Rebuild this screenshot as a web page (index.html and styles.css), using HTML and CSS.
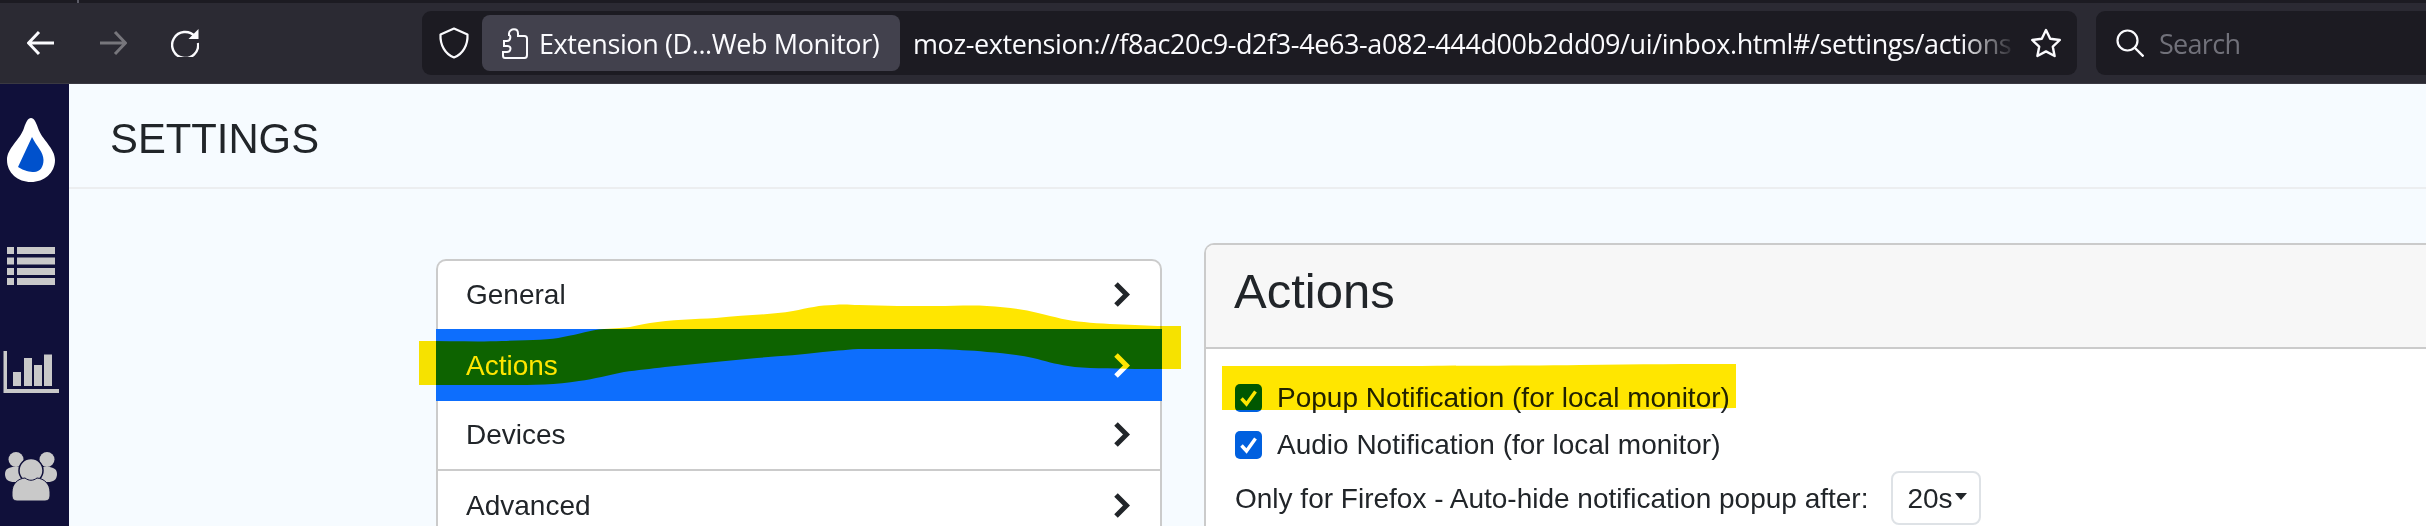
FILE: index.html
```html
<!DOCTYPE html>
<html lang="en">
<head>
<meta charset="utf-8">
<title>Settings</title>
<link rel="stylesheet" href="styles.css">
</head>
<body>
<div class="page">
  <div class="tabstrip"><span class="tick"></span></div>
  <div class="toolbar">
    <svg class="nav" width="28" height="28" viewBox="0 0 28 28"><path d="M27 14H2M12 3L1.500 14 12 25" fill="none" stroke="#fbfbfe" stroke-width="3"/></svg>
    <svg class="nav" width="28" height="28" viewBox="0 0 28 28"><path d="M1 14H26M16 3L26.500 14 16 25" fill="none" stroke="#77767c" stroke-width="3"/></svg>
    <svg class="nav" width="28" height="28" viewBox="0 0 28 28"><path d="M24 7.500A13 13 0 1 0 27 14" fill="none" stroke="#fbfbfe" stroke-width="2.400"/><path d="M27.500 0V10H17.500Z" fill="#fbfbfe"/></svg>
    <div class="urlbar">
      <svg class="shield" width="30" height="32" viewBox="0 0 30 32"><path d="M15 1.500L28.500 7.500C29 18 24 27 15 30.500 6 27 1 18 1.500 7.500Z" fill="none" stroke="#fbfbfe" stroke-width="2.200" stroke-linejoin="round"/></svg>
      <div class="identity">
        <svg width="26" height="31" viewBox="0 0 26 31"><path d="M2 13H5C9 13 9 7 7 7V5.500C7 3 9.500 1.200 12 1.200S16 3 16 5.500V8H22.500C24 8 25 9 25 10.500V27C25 28.800 24 30 22.500 30H3C1.500 30 1 29 1 27.500V24H5C9 24 10 18 5.500 18H2Z" fill="none" stroke="#fbfbfe" stroke-width="2"/></svg>
        <span class="identity-label">Extension (D...Web Monitor)</span>
      </div>
      <span class="url">moz-extension://f8ac20c9-d2f3-4e63-a082-444d00b2dd09/ui/inbox.html#/settings/actions</span>
      <svg class="star" width="32" height="30" viewBox="0 0 32 30"><path d="M16 2L20.200 10.800 29.800 12 22.800 18.700 24.600 28 16 23.400 7.400 28 9.200 18.700 2.200 12 11.800 10.800Z" fill="none" stroke="#fbfbfe" stroke-width="2.400" stroke-linejoin="round"/></svg>
    </div>
    <div class="searchbar">
      <svg width="28" height="28" viewBox="0 0 28 28"><circle cx="11.500" cy="11.500" r="10" fill="none" stroke="#fbfbfe" stroke-width="2.200"/><path d="M18.500 18.500L27.500 27.500" stroke="#fbfbfe" stroke-width="2.400"/></svg>
      <span class="search-label">Search</span>
    </div>
  </div>

  <div class="app">
    <nav class="sidebar">
      <svg class="side-logo" width="69" height="66" viewBox="0 0 69 66"><path d="M31 0C34 0 36 4 38 10 42 22 55 30 55 42 55 55 44 64 31 64 18 64 7 55 7 42 7 30 20 22 24 10 26 4 28 0 31 0Z" fill="#fff"/><path d="M32 19L18 49C24 53 30 54 34 54 40 54 43.500 49 43.500 42 43.500 34 37 29 32 19Z" fill="#0051cc"/></svg>
      <svg class="side-list" width="69" height="38" viewBox="0 0 69 38" fill="#c9c9c9"><rect x="7" y="0" width="7" height="7"/><rect x="17" y="0" width="38" height="7"/><rect x="7" y="10.500" width="7" height="7"/><rect x="17" y="10.500" width="38" height="7"/><rect x="7" y="21" width="7" height="7"/><rect x="17" y="21" width="38" height="7"/><rect x="7" y="31" width="7" height="7"/><rect x="17" y="31" width="38" height="7"/></svg>
      <svg class="side-chart" width="69" height="42" viewBox="0 0 69 42" fill="#c9c9c9"><path d="M3.500 0H7V38H59V42H3.500Z"/><rect x="13" y="21" width="8" height="14"/><rect x="24" y="7" width="8" height="28"/><rect x="34" y="14" width="8" height="21"/><rect x="44" y="3.500" width="8" height="31.500"/></svg>
      <svg class="side-users" width="69" height="50" viewBox="0 0 69 50" fill="#c9c9c9"><circle cx="16" cy="7.500" r="7.500"/><circle cx="47" cy="7.500" r="7.500"/><path d="M5 22C5 17 9 15 14 15H48C53 15 57 17 57 22 57 28 53 30 48 30H14C9 30 5 28 5 22Z"/><circle cx="31" cy="18.500" r="12" stroke="#10103a" stroke-width="1.500"/><path d="M12 40C12 32 18 26.500 25 26 29 29 33 29 37 26 44 26.500 50 32 50 40V44C50 47 48 49 45 49H17C14 49 12 47 12 44Z" stroke="#10103a" stroke-width="1"/></svg>
    </nav>
    <main class="content">
      <header class="page-header"><h1 class="page-title">SETTINGS</h1></header>
      <div class="columns">
        <div class="menu">
          <div class="menu-row"><span>General</span><svg class="chev" width="17" height="25" viewBox="0 0 17 25"><path d="M3 2L13.500 12.500 3 23" fill="none" stroke="#212529" stroke-width="5"/></svg></div>
          <div class="menu-row menu-row-active"><span>Actions</span><svg class="chev" width="17" height="25" viewBox="0 0 17 25"><path d="M3 2L13.500 12.500 3 23" fill="none" stroke="#fff" stroke-width="5"/></svg></div>
          <div class="menu-row"><span>Devices</span><svg class="chev" width="17" height="25" viewBox="0 0 17 25"><path d="M3 2L13.500 12.500 3 23" fill="none" stroke="#212529" stroke-width="5"/></svg></div>
          <div class="menu-row"><span>Advanced</span><svg class="chev" width="17" height="25" viewBox="0 0 17 25"><path d="M3 2L13.500 12.500 3 23" fill="none" stroke="#212529" stroke-width="5"/></svg></div>
        </div>
        <section class="panel">
          <div class="panel-head"><h2 class="panel-title">Actions</h2></div>
          <div class="panel-body">
            <label class="check-row"><span class="check"><svg width="27" height="28" viewBox="0 0 27 28"><path d="M6.500 14.500L11.500 20 20.500 7.500" fill="none" stroke="#fff" stroke-width="3.400"/></svg></span>Popup Notification (for local monitor)</label>
            <label class="check-row"><span class="check"><svg width="27" height="28" viewBox="0 0 27 28"><path d="M6.500 14.500L11.500 20 20.500 7.500" fill="none" stroke="#fff" stroke-width="3.400"/></svg></span>Audio Notification (for local monitor)</label>
            <div class="select-row">
              <span>Only for Firefox - Auto-hide notification popup after:</span>
              <div class="select"><span>20s</span><span class="caret"></span></div>
            </div>
          </div>
        </section>
      </div>
    </main>
  </div>

  <svg class="marker" width="2426" height="526" viewBox="0 0 2426 526">
    <path fill="#ffe600" d="M419 341C450 341 480 342 502 341 530 340 550 340 563 337 580 334 590 330 604 329 615 328 625 328 630 327 636 326 642 324 650 323 670 320 695 319 716 318 745 315 770 315 793 311 808 308 820 305 834 305 845 304 850 305 859 305 885 306 910 306 936 306 955 306 972 305 987 306 1005 307 1022 309 1038 313 1055 317 1068 321 1084 322 1100 324 1120 324 1135 325 1150 326 1165 326 1181 326V369C1165 369 1150 369 1135 369 1110 368 1085 369 1068 366 1055 364 1045 361 1033 358 1018 355 1002 353 987 352 970 350 955 350 936 349 910 349 885 349 864 349 848 349 838 351 823 352 800 355 780 356 757 358 725 361 695 364 665 367 650 369 638 370 624 372 608 375 595 379 579 381 555 385 530 385 502 385 475 385 450 385 419 385Z"/>
    <path fill="#ffe600" d="M1222 366C1350 366 1500 366 1580 365 1640 364 1690 364 1736 364V408C1690 409 1640 410 1580 410 1500 410 1350 410 1222 410Z"/>
  </svg>
</div>
</body>
</html>
```
FILE: styles.css
```css
* { box-sizing: border-box; }
html, body { margin: 0; padding: 0; }
body { width: 2426px; height: 526px; overflow: hidden; background: #f6fbff; color: #212529; font-family: "Liberation Sans", Arial, sans-serif; font-size: 28px; line-height: 41px; }
.page { position: relative; width: 2426px; height: 526px; overflow: hidden; display: flex; flex-direction: column; }

.tabstrip { height: 3px; background: #1c1b22; position: relative; flex: none; }
.tick { display: block; width: 2px; height: 3px; margin-left: 77px; background: #5b5b66; }

.toolbar { flex: none; height: 81px; background: #2b2a33; border-bottom: 1px solid #3a3942; display: flex; align-items: center; padding-left: 27px; font-family: "Open Sans", sans-serif; color: #fbfbfe; }
.nav { flex: none; margin-right: 44px; }
.urlbar { flex: none; margin-left: 179px; width: 1655px; height: 64px; background: #1c1b22; border-radius: 9px; display: flex; align-items: center; padding-left: 17px; }
.shield { flex: none; }
.identity { flex: none; margin-left: 13px; width: 418px; height: 56px; background: #42414d; border-radius: 8px; display: flex; align-items: center; padding-left: 20px; gap: 11px; }
.identity-label { font-size: 27px; letter-spacing: -0.4px; white-space: nowrap; color: #fbfbfe; }
.url { flex: none; margin-left: 13px; width: 1103px; font-size: 27px; letter-spacing: -0.4px; white-space: nowrap; overflow: hidden; color: #fbfbfe; -webkit-mask-image: linear-gradient(to right, #000 95%, transparent 100%); mask-image: linear-gradient(to right, #000 95%, transparent 100%); }
.star { flex: none; margin-left: 14px; }
.searchbar { flex: none; margin-left: 19px; width: 360px; height: 64px; background: #1c1b22; border-radius: 9px; display: flex; align-items: center; padding-left: 20px; gap: 15px; }
.search-label { font-size: 27px; letter-spacing: -0.7px; color: #71717a; }

.app { flex: 1; display: flex; min-height: 0; }
.sidebar { flex: none; width: 69px; background: #10103a; display: flex; flex-direction: column; padding-top: 34px; }
.sidebar svg { display: block; flex: none; }
.side-list { margin-top: 63px; }
.side-chart { margin-top: 66px; }
.side-users { margin-top: 59px; }

.content { flex: 1; min-width: 0; }
.page-header { height: 105px; border-bottom: 2px solid #eceef0; padding: 30px 0 0 41px; }
.page-title { margin: 0; font-size: 41.800px; line-height: 50px; font-weight: 400; }

.columns { display: flex; align-items: flex-start; padding: 54px 0 0 367px; gap: 42px; }
.menu { flex: none; width: 726px; margin-top: 16px; background: #fff; border: 2px solid #cbcbcb; border-bottom: 0; border-radius: 10px 10px 0 0; }
.menu-row { display: flex; justify-content: space-between; align-items: center; height: 70px; padding: 0 30px 1px 28px; border-bottom: 2px solid #cbcbcb; }
.menu-row:first-child { border-bottom: 0; height: 68px; }
.menu-row:last-child { border-bottom: 0; }
.menu-row-active { height: 72px; margin: 0 -2px; padding: 2px 32px 1px 30px; background: #0d6efd; color: #fff; border-bottom: 0; }
.menu-row-active + .menu-row { height: 70px; }
.chev { flex: none; }

.panel { flex: 1; min-width: 0; margin-right: -10px; border: 2px solid #cbcbcb; border-bottom: 0; border-radius: 10px 0 0 0; background: #fff; height: 300px; }
.panel-head { height: 104px; background: #f7f7f7; border-bottom: 2px solid #cbcbcb; border-radius: 8px 0 0 0; padding: 16px 0 0 28px; }
.panel-title { margin: 0; font-size: 49px; line-height: 60px; font-weight: 400; }
.panel-body { padding: 28px 0 0 29px; }
.check-row { display: flex; align-items: center; height: 41px; margin-bottom: 6px; }
.check { flex: none; width: 27px; height: 28px; margin-right: 15px; border-radius: 5px; background: #0060df; }
.check svg { display: block; }
.select-row { display: flex; align-items: center; gap: 23px; margin-top: 3px; }
.select { flex: none; width: 90px; height: 54px; border: 2px solid #dee2e6; border-radius: 8px; display: flex; align-items: center; padding-left: 14px; gap: 2px; }
.caret { width: 0; height: 0; border-left: 6.500px solid transparent; border-right: 6.500px solid transparent; border-top: 7px solid #212529; margin-top: -4px; }

.marker { position: absolute; left: 0; top: 0; pointer-events: none; mix-blend-mode: multiply; }
```
